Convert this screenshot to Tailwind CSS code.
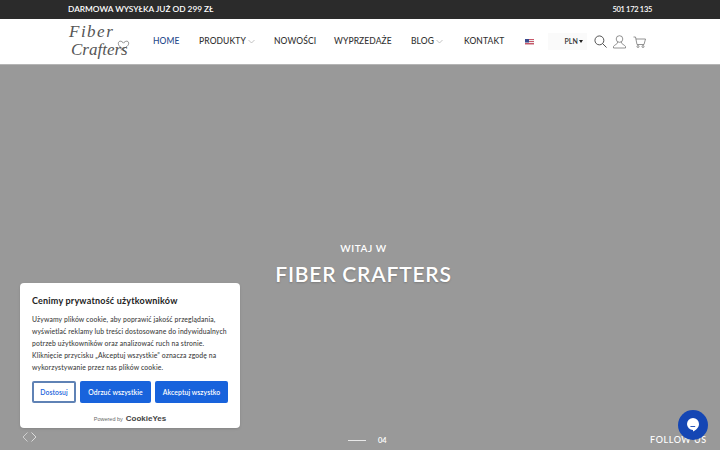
<!DOCTYPE html>
<html lang="pl"><head><meta charset="utf-8"><script src="https://cdn.jsdelivr.net/npm/@tailwindcss/browser@4"></script></head>
<body class="m-0">
<div class="relative flex h-[450px] w-[720px] flex-col overflow-hidden bg-[#999999] font-['Lato',sans-serif] text-[#333]">
  <div class="flex h-[19px] items-center justify-between bg-[#2b2b2b] pl-[68px] pr-[68px] font-semibold text-white">
    <span class="text-[8.300px] tracking-[0px]">DARMOWA WYSYŁKA JUŻ OD 299 ZŁ</span><span class="text-[7.500px] tracking-[-0.3px]">501 172 135</span>
  </div>
  <header class="flex h-[46px] items-center border-b border-[#b5b5b5] bg-white pl-[68px] text-[8.500px] font-medium tracking-[0.1px]">
    <div class="relative mr-[24px] h-[38px] w-[61px] font-['Liberation_Serif',serif] text-[#555] italic">
      <span class="absolute left-[1px] top-[1px] text-[17px] font-normal leading-[15px] tracking-[1.500px]">Fiber</span>
      <span class="absolute left-[3px] top-[18px] text-[17px] font-normal leading-[17px] tracking-[0px]">Crafters</span>
      <svg class="absolute left-[49px] top-[16px]" width="13" height="13" viewBox="0 0 14 13" fill="none" stroke="#555" stroke-width=".7"><path d="M7 11C3 8 1 6 1.500 3.500C2 1.500 5 1 7 4C8.500 1.500 12 1 12.500 3.500C13 6.500 10 8.500 4 11.500"/></svg>
    </div>
    <nav class="flex items-center">
      <span class="w-[46px] text-[#1f4a8c]">HOME</span>
      <span class="flex w-[75px] items-center gap-[2px]">PRODUKTY <svg width="7" height="5" viewBox="0 0 7 5" fill="none" stroke="#aaa" stroke-width=".7"><path d="M.5 1 3.500 4 6.500 1"/></svg></span>
      <span class="w-[60px]">NOWOŚCI</span>
      <span class="w-[77px]">WYPRZEDAŻE</span>
      <span class="flex w-[53px] items-center gap-[2px]">BLOG <svg width="7" height="5" viewBox="0 0 7 5" fill="none" stroke="#aaa" stroke-width=".7"><path d="M.5 1 3.500 4 6.500 1"/></svg></span>
      <span class="w-[61px]">KONTAKT</span>
    </nav>
    <svg width="9" height="6" viewBox="0 0 9 6" class="mr-[14px]"><rect width="9" height="6" fill="#c8586a"/><rect y="1" width="9" height="1" fill="#eee"/><rect y="3" width="9" height="1" fill="#eee"/><rect y="5" width="9" height=".6" fill="#eee"/><rect width="4" height="3.500" fill="#3a4a8c"/></svg>
    <div class="flex h-[17px] w-[39px] items-center justify-end bg-[#fafafa] pr-[4px] text-[7px] font-semibold"><span>PLN</span><span class="mb-[1px] ml-[1px] h-0 w-0 border-x-[2.500px] border-t-[3px] border-x-transparent border-t-[#222]"></span></div>
    <svg width="13" height="13" viewBox="0 0 14 14" fill="none" stroke="#333" stroke-width=".9" class="ml-[7px]"><circle cx="5.800" cy="5.800" r="4.800"/><path d="M9.300 9.300 13.500 13.500"/></svg>
    <svg width="13" height="14" viewBox="0 0 13 14" fill="none" stroke="#666" stroke-width=".7" class="ml-[6px]"><circle cx="6.500" cy="4" r="3.300"/><path d="M4.800 7C5 9 1 10 .5 11.500V13H12.500V11.500C12 10 8 9 8.200 7"/></svg>
    <svg width="13" height="12" viewBox="0 0 13 12" fill="none" stroke="#666" stroke-width=".7" class="ml-[7px]"><path d="M.5 1H2.500L4 8.500H11L12.500 3H3"/><circle cx="5" cy="10.500" r="1"/><circle cx="10" cy="10.500" r="1"/></svg>
  </header>
  <main class="relative flex-1 text-white">
    <div class="absolute inset-x-0 top-[175px] flex flex-col items-center pl-[7px]">
      <p class="text-[10px] leading-[16px] font-semibold tracking-[0.6px]">WITAJ W</p>
      <h1 class="mt-[4px] text-[21px] leading-[28px] font-semibold tracking-[0.8px] [text-shadow:0_1px_2px_rgba(0,0,0,.2)]">FIBER CRAFTERS</h1>
    </div>
    <div class="absolute left-[20px] top-[218px] w-[220px] rounded-[4px] bg-white px-[12px] pt-[12px] text-[#3c3c3c] shadow-sm">
      <h2 class="text-[9px] leading-[12px] font-bold tracking-[0.2px] text-[#222]">Cenimy prywatność użytkowników</h2>
      <p class="mt-[6px] text-[6.800px] leading-[12px] font-medium tracking-[0.14px] whitespace-nowrap">Używamy plików cookie, aby poprawić jakość przeglądania,<br>wyświetlać reklamy lub treści dostosowane do indywidualnych<br>potrzeb użytkowników oraz analizować ruch na stronie.<br>Kliknięcie przycisku „Akceptuj wszystkie” oznacza zgodę na<br>wykorzystywanie przez nas plików cookie.</p>
      <div class="mt-[8px] flex gap-[4px] text-[6.800px] font-semibold tracking-[0.1px]">
        <button class="h-[22px] w-[44px] rounded-[2px] border-2 border-[#5f82b5] text-[#1863dc]">Dostosuj</button>
        <button class="h-[22px] w-[71px] rounded-[2px] bg-[#1863dc] text-white">Odrzuć wszystkie</button>
        <button class="h-[22px] w-[73px] rounded-[2px] bg-[#1863dc] text-white">Akceptuj wszystko</button>
      </div>
      <div class="mt-[10px] flex h-[15px] items-center justify-center gap-[3px] pb-[3px] font-['Liberation_Sans',sans-serif]">
        <span class="text-[5.500px] text-[#666]">Powered by</span><span class="text-[8px] font-bold text-[#444]">CookieYes</span>
      </div>
    </div>
    <div class="absolute left-[22px] top-[367px] flex gap-[3px]">
      <svg width="6" height="10" viewBox="0 0 6 10" fill="none" stroke="#ddd" stroke-width=".8"><path d="M5.500.5 1 5 5.500 9.500"/></svg>
      <svg width="6" height="10" viewBox="0 0 6 10" fill="none" stroke="#eee" stroke-width=".8"><path d="M.5.5 5 5 .5 9.500"/></svg>
    </div>
    <div class="absolute left-[348px] top-[370px] flex items-center gap-[12px]">
      <span class="h-px w-[18px] bg-[#e8e8e8]"></span><span class="text-[7.500px] font-semibold">04</span>
    </div>
    <span class="absolute left-[650px] top-[368px] text-[9px] font-medium tracking-[0.6px] whitespace-nowrap">FOLLOW US</span>
    <div class="absolute left-[678px] top-[345px] flex h-[30px] w-[30px] items-center justify-center rounded-full bg-[#1446b4]">
      <svg width="14" height="16" viewBox="0 0 14 16"><path d="M7 1a6 6 0 0 1 6 6c0 3.500-3 6-6 7.500V13A6 6 0 0 1 7 1Z" fill="#fff"/><path d="M4.800 9.500h4" stroke="#1446b4" stroke-width=".9" stroke-linecap="round"/></svg>
    </div>
  </main>
</div>
</body></html>
